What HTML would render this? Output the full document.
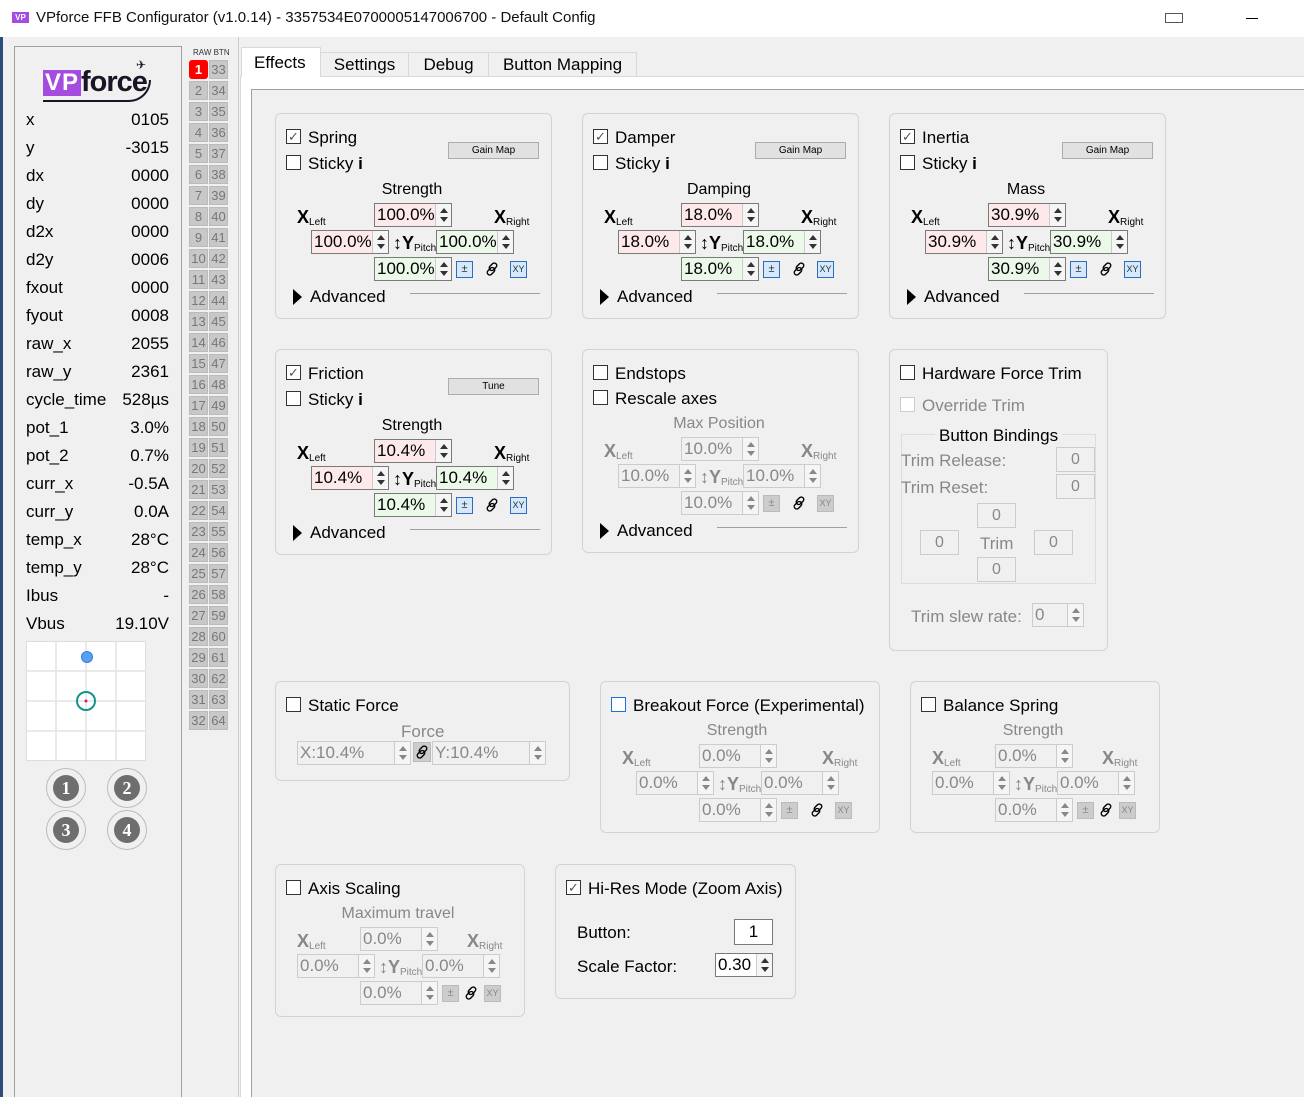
<!DOCTYPE html>
<html><head><meta charset="utf-8"><style>
*{box-sizing:border-box}
html{overflow:hidden;height:1097px}
body{margin:0;width:1304px;height:1097px;background:#f0f0f0;font-family:"Liberation Sans",sans-serif;font-size:16px;color:#000;position:relative;overflow:hidden}
.a{position:absolute;white-space:nowrap}
.g{position:absolute;border:1px solid #d3d3d3;border-radius:6px}
.cb{position:absolute;width:15px;height:15px;border:1px solid #333;background:#fff;font-size:13px;line-height:13px;text-align:center;color:#555}
.cb.dis{border-color:#ccc}
.btn{position:absolute;border:1px solid #adadad;background:#e1e1e1;font-size:10px;text-align:center;line-height:15px}
.ax{position:absolute;width:250px;height:110px}
.ax .l{position:absolute;left:50px;width:130px;text-align:center;top:0;font-size:16px}
.xl{position:absolute;font-weight:bold;font-size:18px}
.xl sub{font-weight:normal;font-size:10px;vertical-align:-2px}
.sp{position:absolute;width:78px;height:24px;border:1px solid #7a7a7a;font-size:17px;line-height:22px;padding-left:2px}
.sp i{position:absolute;right:0;top:0;width:16px;height:22px;border-left:1px solid #ccc;background:#f5f5f5}
.sp i:before,.sp i:after{content:"";position:absolute;left:4px;border-left:4px solid transparent;border-right:4px solid transparent}
.sp i:before{top:4px;border-bottom:5px solid #333}
.sp i:after{bottom:4px;border-top:5px solid #333}
.r{background:#fde9e9}.gr{background:#ebf9e9}
.sm{position:absolute;width:17px;height:17px;border:1px solid #2a6ebd;background:#d8e8f8;font-size:11px;text-align:center;line-height:15px;color:#134}
.lk{position:absolute}
.dis .sp{border-color:#ccc;color:#888;background:#f0f0f0}
.dis .sp i:before{border-bottom-color:#888}.dis .sp i:after{border-top-color:#888}
.dis .l,.dis .xl{color:#888}
.dis .sm{border-color:#bbb;background:#ccc;color:#888}
.adv{position:absolute;font-size:17px}
.adv:before{content:"";position:absolute;left:-17px;top:2px;border-top:8px solid transparent;border-bottom:8px solid transparent;border-left:9px solid #000}
.hr{position:absolute;height:1px;background:#a0a0a0}
.bt{position:absolute;width:19px;height:19px;background:#c8c8c8;border:1px solid #bbb;color:#777;font-size:13px;text-align:center;line-height:17px}
.tb{position:absolute;width:39px;height:25px;border:1px solid #ccc;color:#888;text-align:center;line-height:23px}
.gl{color:#888}
</style></head><body>
<svg width="0" height="0" style="position:absolute"><defs><g id="chain" fill="none" stroke="#000" stroke-width="1.4"><rect x="5.5" y="0.5" width="5" height="8.5" rx="2.5" transform="rotate(45 8 4.75)"/><rect x="3.5" y="5" width="5" height="8.5" rx="2.5" transform="rotate(45 6 9.25)"/></g></defs></svg>
<!-- title bar -->
<div class="a" style="left:0;top:0;width:1304px;height:37px;background:#fff"></div>
<div class="a" style="left:12px;top:12px;width:17px;height:11px;background:#a44be0;color:#fff;font-size:8px;font-weight:bold;line-height:11px;text-align:center">VP</div>
<div class="a" style="left:36px;top:9px;font-size:15px;color:#111">VPforce FFB Configurator (v1.0.14) - 3357534E0700005147006700 - Default Config</div>
<div class="a" style="left:1165px;top:13px;width:18px;height:10px;border:1px solid #555"></div>
<div class="a" style="left:1246px;top:18px;width:12px;height:1px;background:#000"></div>
<div class="a" style="left:0;top:37px;width:3px;height:1060px;background:#2b4d7a"></div>

<!-- left panel -->
<div class="a" style="left:14px;top:46px;width:168px;height:1060px;border:1px solid #a0a0a0"></div>
<div class="a" style="left:43px;top:70px;height:26px;background:#a44be0;color:#fff;font-weight:bold;font-size:24px;line-height:26px;padding:0 2px;letter-spacing:1px">VP</div>
<div class="a" style="left:81px;top:66px;font-weight:bold;font-size:29px;line-height:32px;color:#1a1424;letter-spacing:-1px">force</div>
<div class="a" style="left:43px;top:80px;width:108px;height:22px;border-bottom:2px solid #1a1424;border-right:2px solid #1a1424;border-radius:0 0 22px 0"></div>
<div class="a" style="left:136px;top:58px;font-size:12px;color:#1a1424">✈</div>
<div class="a" style="left:26px;top:106px;width:143px;font-size:17px;line-height:28px">
<div style="display:flex;justify-content:space-between"><span>x</span><span>0105</span></div>
<div style="display:flex;justify-content:space-between"><span>y</span><span>-3015</span></div>
<div style="display:flex;justify-content:space-between"><span>dx</span><span>0000</span></div>
<div style="display:flex;justify-content:space-between"><span>dy</span><span>0000</span></div>
<div style="display:flex;justify-content:space-between"><span>d2x</span><span>0000</span></div>
<div style="display:flex;justify-content:space-between"><span>d2y</span><span>0006</span></div>
<div style="display:flex;justify-content:space-between"><span>fxout</span><span>0000</span></div>
<div style="display:flex;justify-content:space-between"><span>fyout</span><span>0008</span></div>
<div style="display:flex;justify-content:space-between"><span>raw_x</span><span>2055</span></div>
<div style="display:flex;justify-content:space-between"><span>raw_y</span><span>2361</span></div>
<div style="display:flex;justify-content:space-between"><span>cycle_time</span><span>528µs</span></div>
<div style="display:flex;justify-content:space-between"><span>pot_1</span><span>3.0%</span></div>
<div style="display:flex;justify-content:space-between"><span>pot_2</span><span>0.7%</span></div>
<div style="display:flex;justify-content:space-between"><span>curr_x</span><span>-0.5A</span></div>
<div style="display:flex;justify-content:space-between"><span>curr_y</span><span>0.0A</span></div>
<div style="display:flex;justify-content:space-between"><span>temp_x</span><span>28°C</span></div>
<div style="display:flex;justify-content:space-between"><span>temp_y</span><span>28°C</span></div>
<div style="display:flex;justify-content:space-between"><span>Ibus</span><span>-</span></div>
<div style="display:flex;justify-content:space-between"><span>Vbus</span><span>19.10V</span></div>
</div>
<svg class="a" style="left:26px;top:641px" width="120" height="120">
<rect x="0.5" y="0.5" width="119" height="119" fill="#fff" stroke="#ddd"/>
<path d="M30 0V120M60 0V120M90 0V120M0 30H120M0 60H120M0 90H120" stroke="#e3e3e3" stroke-width="1.5"/>
<circle cx="61" cy="16" r="5.5" fill="#5aa0f0" stroke="#2f7fe0"/>
<circle cx="60" cy="60" r="9" fill="none" stroke="#139488" stroke-width="2"/>
<circle cx="60" cy="60" r="1.5" fill="#d0206a"/>
</svg>
<svg class="a" style="left:44px;top:766px" width="110" height="88">
<g fill="none" stroke="#bbb"><circle cx="22" cy="22" r="19.5"/><circle cx="83" cy="22" r="19.5"/><circle cx="22" cy="64" r="19.5"/><circle cx="83" cy="64" r="19.5"/></g>
<g fill="#6e6e6e"><circle cx="22" cy="22" r="13"/><circle cx="83" cy="22" r="13"/><circle cx="22" cy="64" r="13"/><circle cx="83" cy="64" r="13"/></g>
<g fill="#fff" font-family="Liberation Serif" font-weight="bold" font-size="18" text-anchor="middle"><text x="22" y="28">1</text><text x="83" y="28">2</text><text x="22" y="70">3</text><text x="83" y="70">4</text></g>
</svg>

<!-- buttons column -->
<div class="a" style="left:193px;top:48px;font-size:8px;color:#333">RAW BTN</div>
<div id="btns"></div>
<div class="a" style="left:238px;top:37px;width:1px;height:1060px;background:#ccc"></div>

<!-- tabs -->
<div class="a" style="left:240px;top:76px;width:1070px;height:1030px;border:1px solid #d9d9d9;background:#fff"></div>
<div class="a" style="left:251px;top:89px;width:1060px;height:1020px;border:1px solid #a0a0a0;background:#f0f0f0"></div>
<div class="a" style="left:241px;top:47px;width:80px;height:30px;background:#fff;border:1px solid #d9d9d9;border-bottom:none;font-size:17px;line-height:30px;padding-left:12px">Effects</div>
<div class="a" style="left:320px;top:52px;width:89px;height:25px;border:1px solid #d9d9d9;font-size:17px;line-height:24px;text-align:center">Settings</div>
<div class="a" style="left:408px;top:52px;width:81px;height:25px;border:1px solid #d9d9d9;font-size:17px;line-height:24px;text-align:center">Debug</div>
<div class="a" style="left:488px;top:52px;width:149px;height:25px;border:1px solid #d9d9d9;font-size:17px;line-height:24px;text-align:center">Button Mapping</div>

<!-- panels -->
<div class="g" style="left:275px;top:113px;width:277px;height:206px"></div>
<div class="g" style="left:582px;top:113px;width:277px;height:206px"></div>
<div class="g" style="left:889px;top:113px;width:277px;height:206px"></div>
<div class="g" style="left:275px;top:349px;width:277px;height:206px"></div>
<div class="g" style="left:582px;top:349px;width:277px;height:204px"></div>
<div class="g" style="left:889px;top:349px;width:219px;height:302px"></div>
<div class="g" style="left:275px;top:681px;width:295px;height:100px"></div>
<div class="g" style="left:600px;top:681px;width:280px;height:152px"></div>
<div class="g" style="left:910px;top:681px;width:250px;height:152px"></div>
<div class="g" style="left:275px;top:864px;width:250px;height:153px"></div>
<div class="g" style="left:555px;top:864px;width:241px;height:135px"></div>

<div class="cb" style="left:286px;top:129px">✓</div><div class="a" style="left:308px;top:128px;font-size:17px">Spring</div>
<div class="cb" style="left:286px;top:155px"></div><div class="a" style="left:308px;top:154px;font-size:17px">Sticky <b>i</b></div>
<div class="btn" style="left:448px;top:142px;width:91px;height:17px">Gain Map</div>
<div class="cb" style="left:593px;top:129px">✓</div><div class="a" style="left:615px;top:128px;font-size:17px">Damper</div>
<div class="cb" style="left:593px;top:155px"></div><div class="a" style="left:615px;top:154px;font-size:17px">Sticky <b>i</b></div>
<div class="btn" style="left:755px;top:142px;width:91px;height:17px">Gain Map</div>
<div class="cb" style="left:900px;top:129px">✓</div><div class="a" style="left:922px;top:128px;font-size:17px">Inertia</div>
<div class="cb" style="left:900px;top:155px"></div><div class="a" style="left:922px;top:154px;font-size:17px">Sticky <b>i</b></div>
<div class="btn" style="left:1062px;top:142px;width:91px;height:17px">Gain Map</div>
<div class="cb" style="left:286px;top:365px">✓</div><div class="a" style="left:308px;top:364px;font-size:17px">Friction</div>
<div class="cb" style="left:286px;top:391px"></div><div class="a" style="left:308px;top:390px;font-size:17px">Sticky <b>i</b></div>
<div class="btn" style="left:448px;top:378px;width:91px;height:17px">Tune</div>
<div class="cb" style="left:593px;top:365px"></div><div class="a" style="left:615px;top:364px;font-size:17px">Endstops</div>
<div class="cb" style="left:593px;top:390px"></div><div class="a" style="left:615px;top:389px;font-size:17px">Rescale axes</div>

<div class="adv" style="left:310px;top:287px">Advanced</div><div class="hr" style="left:410px;top:293px;width:130px"></div>
<div class="adv" style="left:617px;top:287px">Advanced</div><div class="hr" style="left:717px;top:293px;width:130px"></div>
<div class="adv" style="left:924px;top:287px">Advanced</div><div class="hr" style="left:1024px;top:293px;width:130px"></div>
<div class="adv" style="left:310px;top:523px">Advanced</div><div class="hr" style="left:410px;top:529px;width:130px"></div>
<div class="adv" style="left:617px;top:521px">Advanced</div><div class="hr" style="left:717px;top:527px;width:130px"></div>

<div id="axes"></div>

<!-- HW trim -->
<div class="cb" style="left:900px;top:365px"></div><div class="a" style="left:922px;top:364px;font-size:17px">Hardware Force Trim</div>
<div class="cb dis" style="left:900px;top:397px"></div><div class="a gl" style="left:922px;top:396px;font-size:17px">Override Trim</div>
<div class="a" style="left:901px;top:434px;width:195px;height:150px;border:1px solid #ddd"></div>
<div class="a" style="left:935px;top:426px;font-size:17px;background:#f0f0f0;padding:0 4px">Button Bindings</div>
<div class="a gl" style="left:901px;top:451px;font-size:17px">Trim Release:</div>
<div class="a gl" style="left:901px;top:478px;font-size:17px">Trim Reset:</div>
<div class="tb" style="left:1056px;top:447px">0</div>
<div class="tb" style="left:1056px;top:474px">0</div>
<div class="tb" style="left:977px;top:503px">0</div>
<div class="tb" style="left:920px;top:530px">0</div>
<div class="a gl" style="left:980px;top:534px;font-size:17px">Trim</div>
<div class="tb" style="left:1034px;top:530px">0</div>
<div class="tb" style="left:977px;top:557px">0</div>
<div class="a gl" style="left:911px;top:607px;font-size:17px">Trim slew rate:</div>
<div class="a dis" style="left:1032px;top:603px"><div class="sp" style="left:0;top:0;width:52px">0<i></i></div></div>

<!-- static force -->
<div class="cb" style="left:286px;top:697px"></div><div class="a" style="left:308px;top:696px;font-size:17px">Static Force</div>
<div class="a gl" style="left:401px;top:722px;font-size:17px">Force</div>
<div class="a dis" style="left:297px;top:741px"><div class="sp" style="left:0;top:0;width:114px">X:10.4%<i></i></div>
<div class="sm" style="left:116px;top:1px;width:18px;height:20px"><svg width="14" height="14" style="margin-top:2px"><use href="#chain"/></svg></div>
<div class="sp" style="left:135px;top:0;width:114px">Y:10.4%<i></i></div></div>

<div class="cb" style="left:611px;top:697px;border-color:#1a73d9"></div><div class="a" style="left:633px;top:696px;font-size:17px">Breakout Force (Experimental)</div>
<div class="cb" style="left:921px;top:697px"></div><div class="a" style="left:943px;top:696px;font-size:17px">Balance Spring</div>
<div class="cb" style="left:286px;top:880px"></div><div class="a" style="left:308px;top:879px;font-size:17px">Axis Scaling</div>

<!-- hires -->
<div class="cb" style="left:566px;top:880px">✓</div><div class="a" style="left:588px;top:879px;font-size:17px">Hi-Res Mode (Zoom Axis)</div>
<div class="a" style="left:577px;top:923px;font-size:17px">Button:</div>
<div class="a" style="left:734px;top:919px;width:39px;height:26px;border:1px solid #7a7a7a;background:#fff;text-align:center;line-height:24px;font-size:17px">1</div>
<div class="a" style="left:577px;top:957px;font-size:17px">Scale Factor:</div>
<div class="a" style="left:715px;top:953px"><div class="sp" style="left:0;top:0;width:58px;background:#fff">0.30<i></i></div></div>

<script>
var b='';for(var i=0;i<32;i++){var y=60+i*21;
b+='<div class="bt" style="left:189px;top:'+y+'px;'+(i==0?'background:#f00;color:#fff;font-weight:bold;border-color:#f00;border-radius:3px':'')+'">'+(i+1)+'</div><div class="bt" style="left:209px;top:'+y+'px">'+(i+33)+'</div>';}
document.getElementById('btns').innerHTML=b;
function ax(x,y,lbl,v,dis,o){o=o||{};var c1=dis?'':'r',c2=dis?'':'gr';
return '<div class="ax'+(dis?' dis':'')+'" style="left:'+x+'px;top:'+y+'px">'+
'<div class="l">'+lbl+'</div>'+
'<div class="xl" style="left:'+(o.xl||0)+'px;top:26px">X<sub>Left</sub></div>'+
'<div class="xl" style="left:'+(o.xr||197)+'px;top:26px">X<sub>Right</sub></div>'+
'<div class="sp '+c1+'" style="left:77px;top:22px">'+v+'<i></i></div>'+
'<div class="sp '+c1+'" style="left:14px;top:49px">'+v+'<i></i></div>'+
'<div class="xl" style="left:96px;top:52px">↕Y<sub>Pitch</sub></div>'+
'<div class="sp '+c2+'" style="left:139px;top:49px">'+v+'<i></i></div>'+
'<div class="sp '+c2+'" style="left:77px;top:76px">'+v+'<i></i></div>'+
'<div class="sm" style="left:'+(o.pm||159)+'px;top:80px">±</div>'+
'<svg class="lk" width="14" height="14" style="left:'+(o.lk||188)+'px;top:81px"><use href="#chain"/></svg>'+
'<div class="sm" style="left:'+(o.xy||213)+'px;top:80px;font-size:9px">XY</div></div>';}
document.getElementById('axes').innerHTML=
ax(297,181,'Strength','100.0%')+ax(604,181,'Damping','18.0%')+ax(911,181,'Mass','30.9%')+
ax(297,417,'Strength','10.4%')+ax(604,415,'Max Position','10.0%',1)+
ax(622,722,'Strength','0.0%',1,{xl:0,xr:200})+ax(918,722,'Strength','0.0%',1,{xl:14,xr:184,pm:159,lk:181,xy:201})+
ax(283,905,'Maximum travel','0.0%',1,{xl:14,xr:184,lk:181,xy:201});
</script>
</body></html>
